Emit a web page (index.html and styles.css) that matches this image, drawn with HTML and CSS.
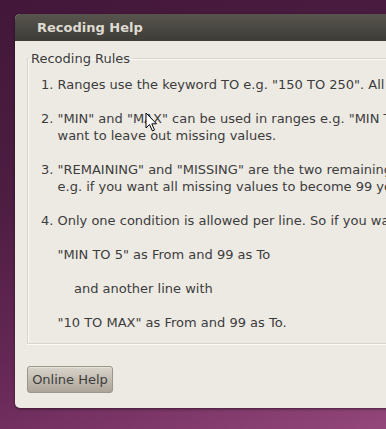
FILE: index.html
```html
<!DOCTYPE html>
<html lang="en">
<head>
    <meta charset="UTF-8">
    <title>Recoding Help</title>
    <link rel="stylesheet" href="styles.css">
</head>
<body>
    <!-- janela do dialogo -->
    <div class="window">
        <div class="titlebar">Recoding Help</div>
        <div class="content">
            <fieldset class="rules">
                <legend>Recoding Rules</legend>
                <div class="rule">
                    <span class="num">1.</span>
                    <span class="txt">Ranges use the keyword TO e.g. "150 TO 250". All values are inclusive.</span>
                </div>
                <div class="rule">
                    <span class="num">2.</span>
                    <span class="txt">"MIN" and "MAX" can be used in ranges e.g. "MIN TO 40" or "60 TO MAX" if you<br>want to leave out missing values.</span>
                </div>
                <div class="rule">
                    <span class="num">3.</span>
                    <span class="txt">"REMAINING" and "MISSING" are the two remaining keywords you can use,<br>e.g. if you want all missing values to become 99 you enter "MISSING" as From.</span>
                </div>
                <div class="rule">
                    <span class="num">4.</span>
                    <span class="txt">Only one condition is allowed per line. So if you want to recode both ends</span>
                </div>
                <div class="example">"MIN TO 5" as From and 99 as To</div>
                <div class="example indent">and another line with</div>
                <div class="example">"10 TO MAX" as From and 99 as To.</div>
            </fieldset>
            <button class="btn">Online Help</button>
        </div>
    </div>

    <!-- ponteiro do mouse -->
    <svg class="cursor" width="14" height="21" viewBox="0 0 14 21">
        <path d="M1 1 L1 16 L4.5 12.5 L7.5 19 L9.5 18 L6.8 11.8 L11.5 11.8 Z" fill="#fff" stroke="#000" stroke-width="1" stroke-linejoin="round"/>
    </svg>
</body>
</html>
```

FILE: styles.css
```css
body {
    margin: 0;
    height: 429px;
    overflow: hidden;
    position: relative;
    font-family: "DejaVu Sans", sans-serif;
    font-size: 13px;
    color: #3c3c3c;
    background: linear-gradient(160deg, #42173a 0%, #4d1d42 35%, #6a2a5a 70%, #94477a 100%);
}
.window {
    margin: 14px 0 0 15px;
    width: 520px;
    border-radius: 5px;
    background-color: #edeae4;
    box-shadow: 0 1px 3px rgba(0, 0, 0, 0.5);
    overflow: hidden;
}
.titlebar {
    height: 27px;
    line-height: 28px;
    padding-left: 22px;
    font-weight: bold;
    color: #dfdbd2;
    background: linear-gradient(#57544d, #3d3c37);
}
.content {
    padding: 9px 0 15px 12px;
}
.rules {
    margin: 0;
    padding: 9px 0 12px 13px;
    border: 1px solid #d8d4cc;
    border-right: none;
    box-shadow: inset 1px 1px 0 #fbfaf8, 0 1px 0 #fbfaf8;
    line-height: 17px;
    white-space: nowrap;
}
.rules legend {
    padding: 0 2px;
    margin-left: -12px;
}
.rule {
    display: flex;
    margin-bottom: 17px;
}
.num {
    width: 16.5px;
    flex-shrink: 0;
}
.example {
    padding-left: 16.5px;
    margin-bottom: 17px;
}
.example:last-child {
    margin-bottom: 0;
}
.example.indent {
    padding-left: 33px;
}
.btn {
    display: block;
    margin-top: 22px;
    width: 86px;
    height: 27px;
    padding: 0;
    font-family: "DejaVu Sans", sans-serif;
    font-size: 13px;
    color: #3c3c3c;
    border: 1px solid #9c9589;
    border-radius: 3px;
    background: linear-gradient(#d9d4cb, #aca497);
    box-shadow: inset 0 1px 0 #e6e2da;
}
.cursor {
    position: absolute;
    left: 145px;
    top: 112px;
}
```
